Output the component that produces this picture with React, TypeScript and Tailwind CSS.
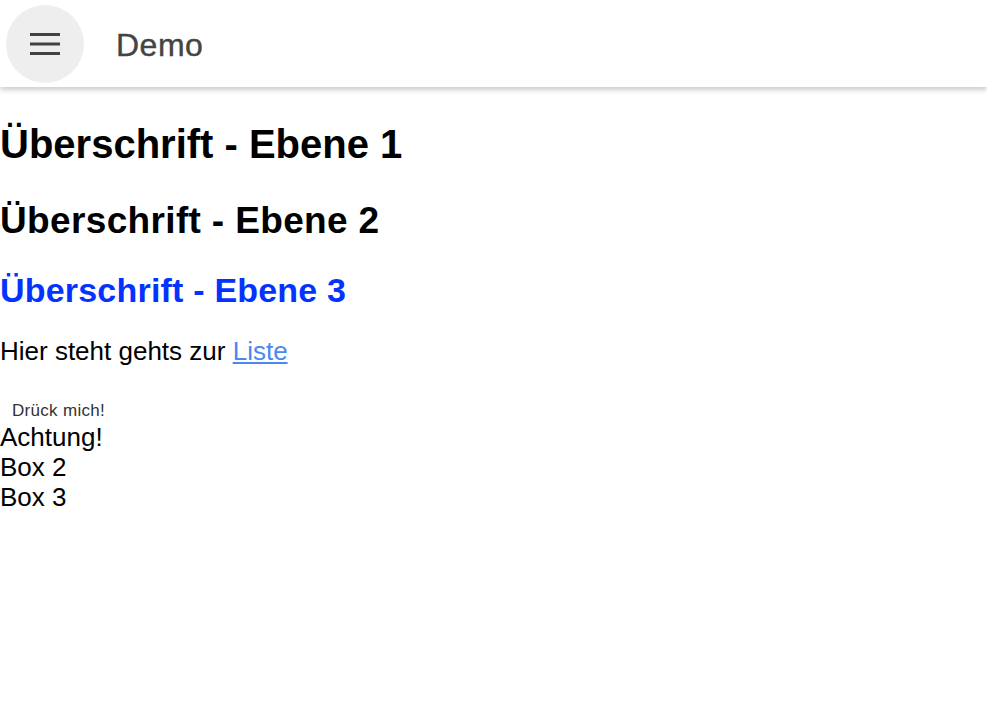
export default function App() {
  return (
    <div className="min-h-screen bg-white font-['Liberation_Sans',Arial,sans-serif] text-black">
      <header className="relative z-10 flex h-[87px] items-center bg-white shadow-[0_3px_5px_rgba(0,0,0,0.2)]">
        <button className="ml-[6px] flex h-[78px] w-[78px] items-center justify-center rounded-full bg-[#eeeeee]">
          <svg width="30" height="22" viewBox="0 0 30 22" fill="#424242">
            <rect x="0" y="0" width="30" height="3" />
            <rect x="0" y="9.5" width="30" height="3" />
            <rect x="0" y="19" width="30" height="3" />
          </svg>
        </button>
        <span className="ml-[32px] mt-[2px] text-[32px] leading-none tracking-[0.5px] text-[#444444] [-webkit-text-stroke:0.4px_#444444]">Demo</span>
      </header>

      <main>
        <h1 className="mt-[34px] text-[40px] font-bold leading-[46px]">Überschrift - Ebene 1</h1>
        <h2 className="mt-[32px] text-[37px] font-bold leading-[44px] tracking-[0.35px]">Überschrift - Ebene 2</h2>
        <h3 className="mt-[27px] text-[34px] font-bold leading-[40px] tracking-[0.2px] text-[#0433ff]">Überschrift - Ebene 3</h3>
        <p className="mt-[26px] text-[26px] leading-[30px]">
          Hier steht gehts zur{" "}
          <a href="#" className="text-[#4a88f0] underline">
            Liste
          </a>
        </p>
        <button className="mt-[33px] block px-[12px] pt-[2px] pb-0 text-[17px] leading-[20px] tracking-[0.3px] text-[#333333]">
          Drück mich!
        </button>
        <div className="mt-[1px] text-[26px] leading-[30px]">
          <div>Achtung!</div>
          <div>Box 2</div>
          <div>Box 3</div>
        </div>
      </main>
    </div>
  );
}
